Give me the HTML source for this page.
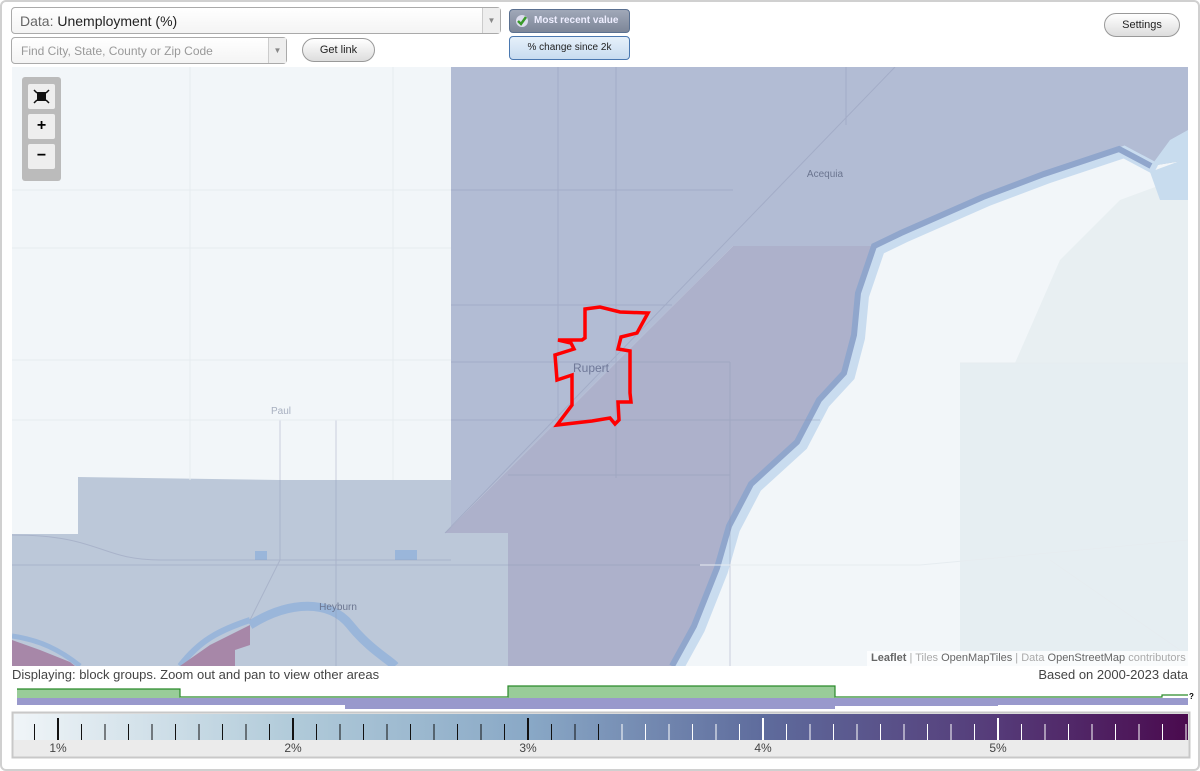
<!DOCTYPE html>
<html><head><meta charset="utf-8"><style>
*{box-sizing:border-box;margin:0;padding:0}
body{width:1200px;height:771px;background:#fff;font-family:"Liberation Sans",Arial,sans-serif;position:relative;overflow:hidden}
.frame{position:absolute;left:0;top:0;width:1200px;height:771px;border:2px solid #d0d0d0;border-radius:6px}
.sel{position:absolute;background:#fff;border:1px solid #aaa;border-radius:4px;background:linear-gradient(#fff,#f4f4f4)}
.sel .arr{position:absolute;right:0;top:0;bottom:0;width:18px;border-left:1px solid #ccc;background:#eee;color:#888;font-size:8px;text-align:center}
.btn{position:absolute;border:1px solid #999;border-radius:12px;background:linear-gradient(#fff,#ddd);font-size:11px;text-align:center;color:#222}
.t{position:absolute;white-space:nowrap}
</style></head><body>
<div class="frame"></div>

<div class="sel" style="left:11px;top:7px;width:490px;height:27px"><span class="t" style="left:8px;top:5px;font-size:14px;color:#666">Data: <span style="color:#222">Unemployment (%)</span></span><div class="arr" style="line-height:25px">▼</div></div>
<div class="sel" style="left:11px;top:37px;width:276px;height:27px"><span class="t" style="left:9px;top:6px;font-size:12px;color:#999">Find City, State, County or Zip Code</span><div class="arr" style="line-height:25px">▼</div></div>
<div class="btn" style="left:302px;top:38px;width:73px;height:24px;line-height:22px">Get link</div>
<div style="position:absolute;left:509px;top:9px;width:121px;height:24px;border:1px solid #5a7090;border-radius:4px;background:linear-gradient(#a0a8b8,#7d8698);font-size:10px;font-weight:bold;color:#eef;line-height:21px;padding-left:24px">Most recent value
<svg style="position:absolute;left:5px;top:4px" width="14" height="14" viewBox="0 0 14 14"><circle cx="7" cy="7" r="6" fill="#dde"/><path d="M3 7l3 3 5-7" stroke="#3a9a2a" stroke-width="2.5" fill="none"/></svg></div>
<div style="position:absolute;left:509px;top:36px;width:121px;height:24px;border:1px solid #4a78b0;border-radius:4px;background:linear-gradient(#e6f0fa,#c8dcf0);font-size:10px;color:#222;text-align:center;line-height:21px">% change since 2k</div>
<div class="btn" style="left:1104px;top:13px;width:76px;height:24px;line-height:22px">Settings</div>

<svg style="position:absolute;left:0;top:0" width="1200" height="771">
<defs><clipPath id="m"><rect x="12" y="67" width="1176" height="599"/></clipPath>
<pattern id="pb" x="10.5" y="0" width="23.5" height="771" patternUnits="userSpaceOnUse"><rect x="0" y="724" width="1" height="16" fill="#111"/></pattern>
<pattern id="pw" x="10.5" y="0" width="23.5" height="771" patternUnits="userSpaceOnUse"><rect x="0" y="724" width="1" height="16" fill="#fff"/></pattern>
<linearGradient id="lg" x1="0" x2="1"><stop offset="0" stop-color="#f0f5f8"/><stop offset=".24" stop-color="#b0cad9"/><stop offset=".44" stop-color="#89a8c6"/><stop offset=".64" stop-color="#5e6b9c"/><stop offset=".84" stop-color="#553a78"/><stop offset="1" stop-color="#4a0a4e"/></linearGradient></defs>
<g clip-path="url(#m)">
<rect x="12" y="67" width="1176" height="599" fill="#f2f6f9"/>
<polygon points="960,363 1188,363 1188,666 960,666" fill="#e6eef2"/>
<polygon points="1015,363 1060,260 1120,200 1188,175 1188,363" fill="#e8eff2"/>
<polygon points="78,477 280,480 451,480 451,533 508,533 508,666 12,666 12,534 78,534" fill="#bcc8d9"/>
<polygon points="451,67 1188,67 1188,160 1151,166 1119,149 1044,174 983,197 901,233 874,246 733,246 445,533 451,533" fill="#b2bcd4"/>
<polygon points="733,246 874,246 858,293 854,335 844,373 819,400 797,442 751,484 729,526 717,568 694,626 672,666 508,666 508,533 445,533" fill="#adb1cb"/>
<path d="M1151,166 1119,149 1044,174 983,197 901,233 874,246 858,293 854,335 844,373 819,400 797,442 751,484 729,526 717,568 694,626 672,666" stroke="#c9dcef" stroke-width="12" fill="none" transform="translate(5,3)"/>
<path d="M1151,166 1119,149 1044,174 983,197 901,233 874,246 858,293 854,335 844,373 819,400 797,442 751,484 729,526 717,568 694,626 672,666" stroke="#90a6cc" stroke-width="6" fill="none"/>
<polygon points="1151,166 1170,140 1188,130 1188,160" fill="#c8dcee"/>
<polygon points="1150,172 1188,158 1188,200 1160,200" fill="#c8dcee"/>
<path d="M250,625 C290,600 330,600 350,625 S390,660 395,666" stroke="#9ab6da" stroke-width="9" fill="none"/>
<path d="M180,666 C200,640 220,630 250,620" stroke="#9ab6da" stroke-width="6" fill="none"/>
<polygon points="180,666 210,645 250,625 250,645 235,650 235,666" fill="#a787a8"/>
<polygon points="12,640 40,650 70,662 75,666 12,666" fill="#a787a8"/>
<path d="M12,636 C40,640 60,650 80,666" stroke="#9ab6da" stroke-width="5" fill="none"/>
<rect x="255" y="551" width="12" height="9" fill="#9ab6da"/><rect x="395" y="550" width="22" height="10" fill="#9ab6da"/>
<g stroke="#8d96b4" stroke-width="1" fill="none" opacity=".4">
<path d="M445,533 L895,67"/><path d="M451,305 L672,305"/><path d="M451,362 L730,362"/><path d="M451,420 L820,420"/><path d="M616,67 V478"/><path d="M558,67 V420"/><path d="M730,362 V666"/><path d="M508,475 H730"/><path d="M451,190 H733"/><path d="M846,67 V125"/><path d="M12,565 H700"/><path d="M336,420 V666"/><path d="M280,420 V560 L250,620"/><path d="M12,535 C100,535 100,560 160,560 H451"/>
</g>
<g stroke="#e6ecf0" stroke-width="1" fill="none"><path d="M12,420 H451"/><path d="M12,360 H451"/><path d="M190,67 V480"/><path d="M393,67 V480"/><path d="M12,190 H451"/><path d="M12,248 H451"/><path d="M960,363 H1188"/><path d="M700,565 H920 L1188,540"/><path d="M1050,560 L1180,650"/></g>
<text x="825" y="177" font-size="10" fill="#6b7590" text-anchor="middle" font-family="Liberation Sans">Acequia</text>
<text x="591" y="372" font-size="12" fill="#6f7898" text-anchor="middle" font-family="Liberation Sans">Rupert</text>
<text x="281" y="414" font-size="10" fill="#a8b0c0" text-anchor="middle" font-family="Liberation Sans">Paul</text>
<text x="338" y="610" font-size="10" fill="#6b7590" text-anchor="middle" font-family="Liberation Sans">Heyburn</text>
<polygon points="585,309 600,307 620,312 648,313 637,333 621,337 618,349 630,351 630,393 631,402 618,402 619,420 615,424 610,418 592,421 557,425 572,405 572,375 557,380 555,355 574,349 571,343 558,340 582,340 585,338" fill="none" stroke="#ff0000" stroke-width="3.5" stroke-linejoin="miter"/>
</g>
<rect x="17" y="698" width="1171" height="7" fill="#9999cc"/>
<rect x="345" y="705" width="490" height="4" fill="#9999cc"/>
<rect x="835" y="705" width="163" height="1" fill="#9999cc"/>
<rect x="17" y="689" width="163" height="9" fill="#99cc99"/>
<rect x="508" y="686" width="327" height="12" fill="#99cc99"/>
<path d="M17,689 H180 V697 H508 V686 H835 V697 H1162 V695 H1188" stroke="#2a8a2a" stroke-width="1.2" fill="none"/>
<text x="1189" y="699" font-size="8" font-weight="bold" font-family="Liberation Sans">?</text>
<rect x="12.5" y="712.5" width="1177" height="45" fill="#ebebeb" stroke="#c8c8c8" stroke-width="2"/>
<rect x="14" y="714" width="1174" height="26" fill="url(#lg)"/>
<rect x="14" y="714" width="606" height="26" fill="url(#pb)"/>
<rect x="620" y="714" width="568" height="26" fill="url(#pw)"/>
<rect x="57" y="718" width="2" height="22" fill="#111"/><rect x="292" y="718" width="2" height="22" fill="#111"/><rect x="527" y="718" width="2" height="22" fill="#111"/><rect x="762" y="718" width="2" height="22" fill="#fff"/><rect x="997" y="718" width="2" height="22" fill="#fff"/>
<g font-size="12" fill="#444" font-family="Liberation Sans" text-anchor="middle"><text x="58" y="752">1%</text><text x="293" y="752">2%</text><text x="528" y="752">3%</text><text x="763" y="752">4%</text><text x="998" y="752">5%</text></g>
</svg>

<div style="position:absolute;left:22px;top:77px;width:39px;height:104px;background:#bbb;border-radius:3px"></div>
<div style="position:absolute;left:28px;top:84px;width:27px;height:25px;background:#eee;border-radius:2px"><svg width="27" height="25"><rect x="9" y="8" width="9" height="9" fill="#111"/><path d="M6 6l3 3M21 6l-3 3M6 19l3-3M21 19l-3-3" stroke="#111" stroke-width="1.5"/></svg></div>
<div style="position:absolute;left:28px;top:114px;width:27px;height:25px;background:#eee;border-radius:2px;font-weight:bold;font-size:16px;text-align:center;line-height:24px">+</div>
<div style="position:absolute;left:28px;top:144px;width:27px;height:25px;background:#eee;border-radius:2px;font-weight:bold;font-size:16px;text-align:center;line-height:23px">−</div>

<div class="t" style="left:867px;top:651px;width:321px;height:15px;background:rgba(255,255,255,.75);font-size:11px;color:#aaa;line-height:15px;padding-left:4px"><b style="color:#666">Leaflet</b> | Tiles <span style="color:#666">OpenMapTiles</span> | Data <span style="color:#666">OpenStreetMap</span> contributors</div>
<div class="t" style="left:12px;top:667px;font-size:13px;color:#444">Displaying: block groups. Zoom out and pan to view other areas</div>
<div class="t" style="right:12px;top:667px;font-size:13px;color:#444">Based on 2000-2023 data</div>
</body></html>
